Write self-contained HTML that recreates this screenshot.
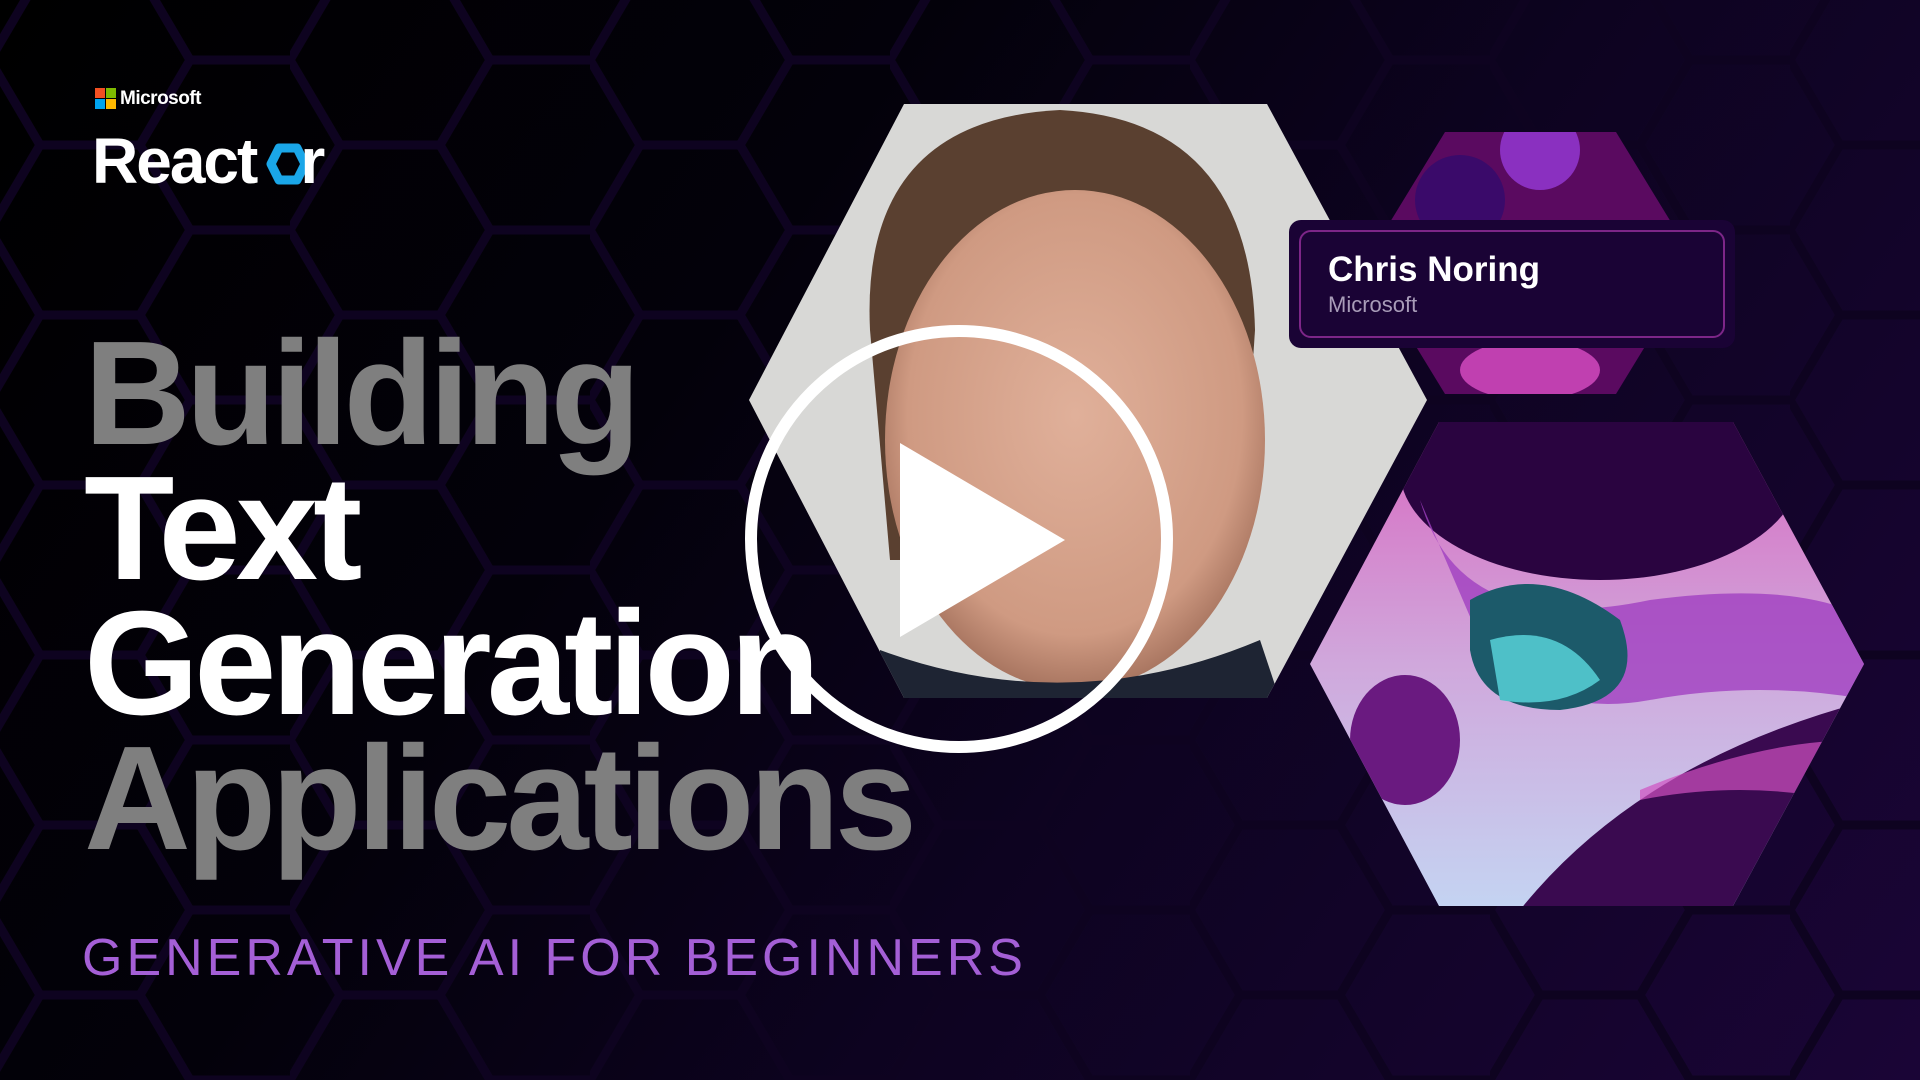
<!DOCTYPE html>
<html><head><meta charset="utf-8"><style>
*{margin:0;padding:0;box-sizing:border-box}
body{width:1920px;height:1080px;overflow:hidden;background:#000;font-family:"Liberation Sans",sans-serif;position:relative}
.bg{position:absolute;inset:0;background:linear-gradient(125deg,#000 0%,#03010a 35%,#0d0320 60%,#1a0536 100%)}
svg.full{position:absolute;left:0;top:0}
.t{position:absolute;left:84px;font-weight:bold;font-size:148px;letter-spacing:-5px;line-height:1;white-space:nowrap}
.sub{position:absolute;left:82px;top:928px;font-size:52px;color:#a45fd6;letter-spacing:4px;white-space:nowrap}
.card{position:absolute;left:1289px;top:220px;width:446px;height:128px;background:#1a0335;border-radius:12px}
.card .in{position:absolute;left:10px;top:10px;right:10px;bottom:10px;border:2px solid #7d2688;border-radius:12px}
.card .n{position:absolute;left:39px;top:30px;color:#fff;font-weight:bold;font-size:35px}
.card .c{position:absolute;left:39px;top:72px;color:#a89cb8;font-size:22px}
</style></head><body>
<div class="bg"></div>
<svg class="full" width="1920" height="1080">
<defs>
<pattern id="hx" width="300" height="170" patternUnits="userSpaceOnUse" x="-10" y="-25">
<path d="M0 85 L50 0 L150 0 L200 85 L150 170 L50 170 Z M200 85 L300 85" fill="none" stroke="#0e0320" stroke-width="9"/>
</pattern>
<clipPath id="ph"><path d="M904 104 L1267 104 L1427 400 L1267 698 L904 698 L749 400 Z"/></clipPath>
<clipPath id="h2"><path d="M1445 132 L1616 132 L1696 263 L1616 394 L1445 394 L1365 263 Z"/></clipPath>
<clipPath id="h3"><path d="M1439 422 L1733 422 L1864 664 L1733 906 L1439 906 L1310 664 Z"/></clipPath>
<linearGradient id="pk" x1="0" y1="0" x2="0" y2="1"><stop offset="0" stop-color="#d868c0"/><stop offset=".5" stop-color="#d0a8dc"/><stop offset="1" stop-color="#c4d4f2"/></linearGradient>
<radialGradient id="face" cx=".5" cy=".45" r=".55"><stop offset="0" stop-color="#e0b09a"/><stop offset=".8" stop-color="#cf9a82"/><stop offset="1" stop-color="#a87560"/></radialGradient>
</defs>
<rect width="1920" height="1080" fill="url(#hx)"/>
<g clip-path="url(#ph)">
<rect x="740" y="100" width="700" height="600" fill="#d8d8d6"/>
<path d="M870 330 Q860 120 1060 110 Q1250 120 1255 330 L1240 560 L890 560 Z" fill="#5a4030"/>
<ellipse cx="1075" cy="440" rx="190" ry="250" fill="url(#face)"/>
<path d="M880 650 Q1070 720 1260 640 L1280 700 L880 700 Z" fill="#1e2433"/>
</g>
<g clip-path="url(#h2)">
<rect x="1360" y="130" width="340" height="270" fill="#5a0a60"/>
<circle cx="1540" cy="150" r="40" fill="#8a30c0"/><circle cx="1460" cy="200" r="45" fill="#3a0a6a"/>
<ellipse cx="1530" cy="370" rx="70" ry="30" fill="#c040b0"/>
</g>
<g clip-path="url(#h3)">
<rect x="1300" y="420" width="570" height="490" fill="url(#pk)"/>
<ellipse cx="1600" cy="470" rx="200" ry="110" fill="#2a0440"/>
<path d="M1420 500 Q1460 640 1650 600 Q1800 580 1870 620 L1870 700 Q1760 680 1650 700 Q1540 720 1480 640 Z" fill="#a040c0" opacity=".8"/>
<path d="M1470 600 Q1540 560 1620 620 Q1650 700 1560 710 Q1480 710 1470 650 Z" fill="#1c5a6a"/>
<path d="M1490 640 Q1560 620 1600 680 Q1560 710 1500 700 Z" fill="#4ec0c8"/>
<ellipse cx="1405" cy="740" rx="55" ry="65" fill="#6a1a80"/>
<path d="M1520 910 Q1640 760 1870 700 L1870 910 Z" fill="#3a0a50"/>
<path d="M1640 790 Q1760 740 1860 740 L1840 800 Q1740 780 1640 800 Z" fill="#d050c0" opacity=".7"/>
</g>
<circle cx="959" cy="539" r="208" fill="none" stroke="#fff" stroke-width="12"/>
<path d="M900 443 L900 637 L1065 540 Z" fill="#fff"/>
<rect x="95" y="88" width="10" height="10" fill="#f25022"/><rect x="106" y="88" width="10" height="10" fill="#7fba00"/>
<rect x="95" y="99" width="10" height="10" fill="#00a4ef"/><rect x="106" y="99" width="10" height="10" fill="#ffb900"/>
<path d="M279 148 L297 148 L305 164 L297 180 L279 180 L271 164 Z" fill="none" stroke="#1aa6e8" stroke-width="9" stroke-linejoin="round"/>
</svg>
<div style="position:absolute;left:120px;top:88px;color:#fff;font-size:19px;font-weight:bold;letter-spacing:-0.5px">Microsoft</div>
<div style="position:absolute;left:92px;top:124px;color:#fff;font-size:64px;font-weight:bold;letter-spacing:-2px">React<span style="display:inline-block;width:44px"></span>r</div>
<div class="t" style="top:320px;color:#7f7f7f">Building</div>
<div class="t" style="top:455px;color:#fff">Text</div>
<div class="t" style="top:590px;color:#fff">Generation</div>
<div class="t" style="top:725px;color:#7f7f7f">Applications</div>
<div class="sub">GENERATIVE AI FOR BEGINNERS</div>
<div class="card"><div class="in"></div><div class="n">Chris Noring</div><div class="c">Microsoft</div></div>
</body></html>
